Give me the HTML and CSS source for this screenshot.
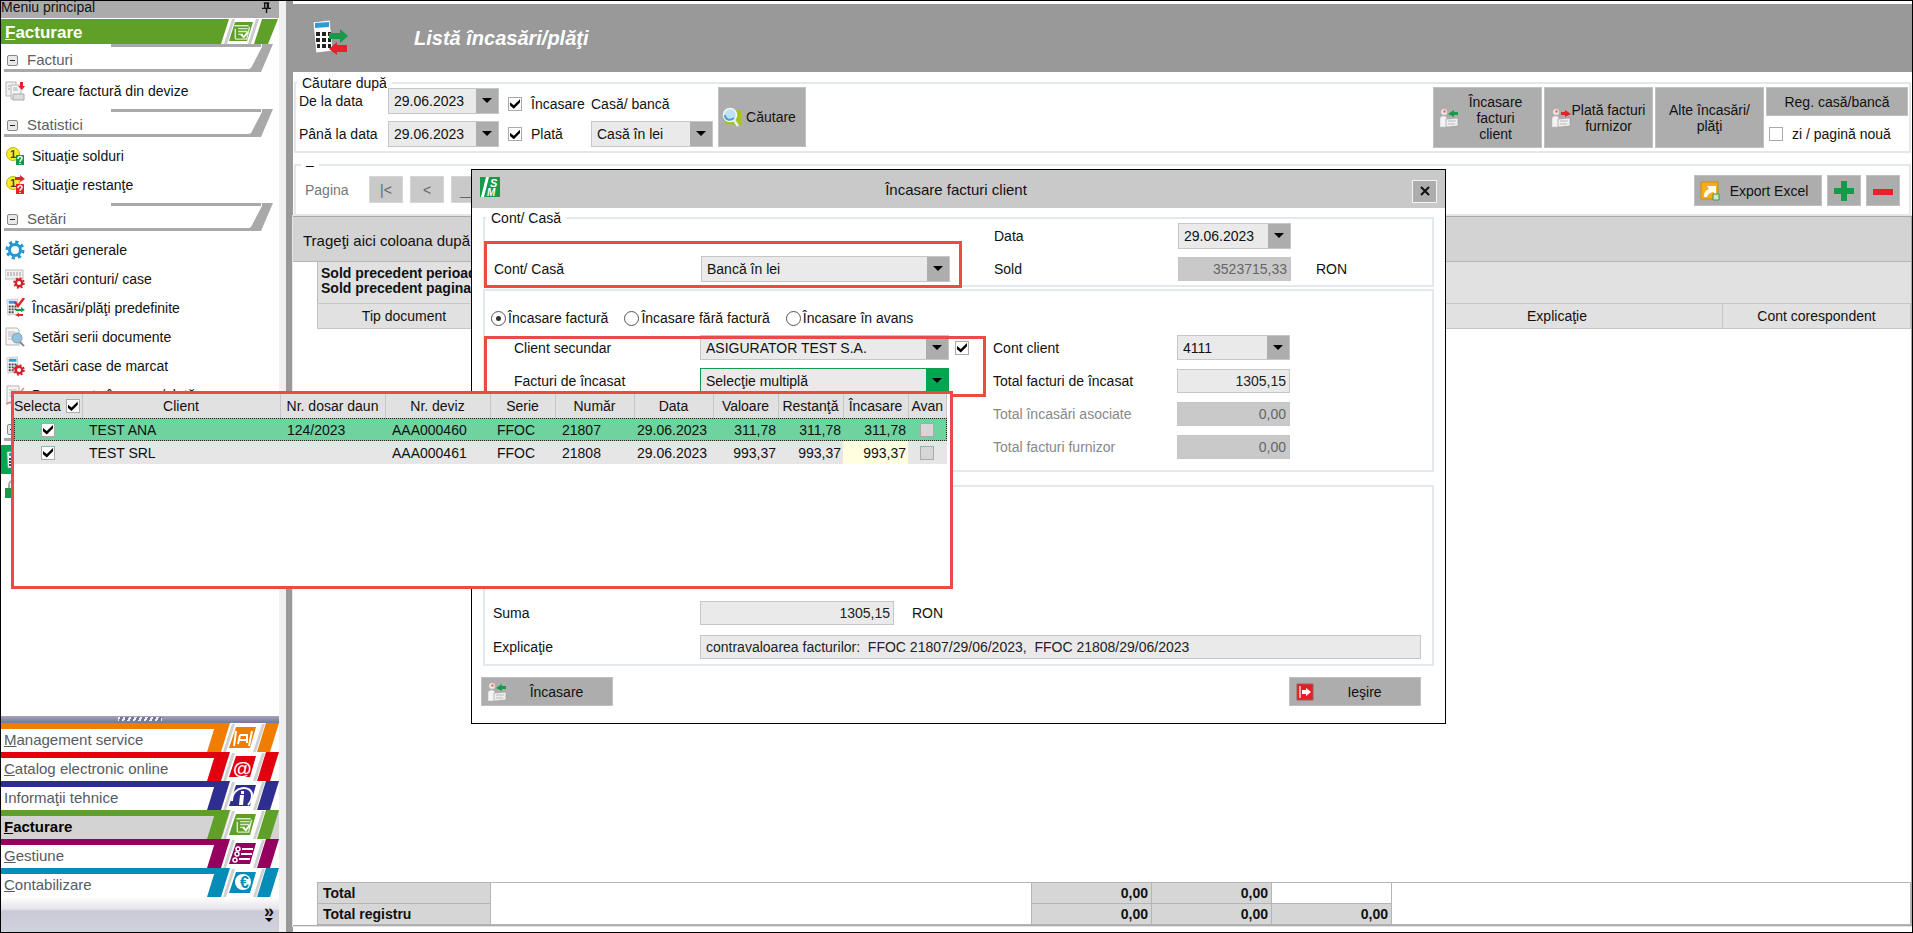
FILE: index.html
```html
<!DOCTYPE html>
<html lang="ro">
<head>
  <meta charset="UTF-8" />
  <meta name="viewport" content="width=device-width, initial-scale=1.0" />
  <title>Listă încasări/plăţi</title>
  <link rel="stylesheet" href="styles.css">
</head>
<body>
  <!-- icons -->
  <svg class="sprite" aria-hidden="true">
    <symbol id="calc" viewBox="0 0 20 20">
      <path d="M2 2l11-1 1 16-11 1z" fill="#f4f4f4" stroke="#aaa" stroke-width=".6" />
      <path d="M4 3h8v3H4z" fill="#2a9bd6" />
      <path d="M4 8h2v2H4zm3 0h2v2H7zm3 0h2v2h-2zM4 11h2v2H4zm3 0h2v2H7zm3 0h2v2h-2zM4 14h2v2H4zm3 0h2v2H7z" fill="#444" />
    </symbol>
    <symbol id="calc-arrows" viewBox="0 0 36 36">
      <path d="M1 2l17-2 3 31-17 2z" fill="#fff" stroke="#888" stroke-width=".7" />
      <path d="M3 3l14-1v5l-14 1z" fill="#2a9bd6" />
      <path d="M4 12h4v4H4zm6 0h4v4h-4zm6 0h3v4h-3zM4 18h4v4H4zm6 0h4v4h-4zm6 0h3v4h-3zM5 24h3v4H5zm5 0h4v4h-4zm6 0h3v4h-3z" fill="#222" />
      <path d="M17 13h11V9l8 7-8 7v-4H17z" fill="#159a49" />
      <path d="M35 25H25v-3l-8 7 8 6v-3h10z" fill="#e62129" />
    </symbol>
    <symbol id="doc-down" viewBox="0 0 20 20">
      <path d="M1 1h10v14H1z" fill="#f1f1f1" stroke="#b5b5b5" />
      <path d="M6 4h10v14H6z" fill="#f7f7f7" stroke="#b5b5b5" />
      <path d="M8 7h4M8 9h5M3 5h2M3 8h2" stroke="#aaa" />
      <path d="M8 13h11v6H8z" fill="#ddd" stroke="#aaa" />
      <path d="M15 1h3v4h2l-3 4-4-4h2z" fill="#e62129" />
    </symbol>
    <symbol id="coin-green" viewBox="0 0 20 20">
      <circle cx="8" cy="8" r="6.500" fill="#ffee1e" stroke="#b9ae2c" />
      <text x="5" y="12" class="glyph">1</text>
      <path d="M11 9h8v10h-8z" fill="#159a49" />
      <path d="M13 13c0-3 4-3 4-1s-2 2-2 4M15 17v1" fill="none" stroke="#fff" stroke-width="1.500" />
    </symbol>
    <symbol id="coin-red" viewBox="0 0 20 20">
      <circle cx="8" cy="8" r="6.500" fill="#ffee1e" stroke="#b9ae2c" />
      <text x="5" y="12" class="glyph">1</text>
      <path d="M11 9h8v10h-8z" fill="#e62129" />
      <path d="M13 13c0-3 4-3 4-1s-2 2-2 4M15 17v1" fill="none" stroke="#fff" stroke-width="1.500" />
      <path d="M10 2h5V0l5 4-5 3V5h-5z" fill="#e62129" />
    </symbol>
    <symbol id="gear" viewBox="0 0 20 20">
      <circle cx="10" cy="10" r="8" fill="none" stroke="#2498d2" stroke-width="3" stroke-dasharray="3.200 3.080" />
      <circle cx="10" cy="10" r="5.500" fill="#fff" stroke="#2498d2" stroke-width="3" />
    </symbol>
    <symbol id="red-gear" viewBox="0 0 12 12">
      <circle cx="6" cy="6" r="4.800" fill="none" stroke="#d2232a" stroke-width="2" stroke-dasharray="1.900 1.870" />
      <circle cx="6" cy="6" r="3.200" fill="#fff" stroke="#d2232a" stroke-width="2.400" />
    </symbol>
    <symbol id="accounts" viewBox="0 0 20 20">
      <path d="M0 1h18v9H0z" fill="#f1f1f1" stroke="#bbb" />
      <path d="M2 4h14M2 6h14" stroke="#999" stroke-dasharray="2 1" />
      <use href="#red-gear" x="8" y="8" width="12" height="12" />
    </symbol>
    <symbol id="calc-check" viewBox="0 0 20 20">
      <use href="#calc" width="19" height="19" />
      <path d="M10 4l3 4 6-8" fill="none" stroke="#e62129" stroke-width="2.500" />
      <path d="M11 11h5V9l4 3-4 2v-1h-5z" fill="#159a49" />
      <path d="M18 16h-4v-1l-4 2 4 2v-1h4z" fill="#e62129" />
    </symbol>
    <symbol id="doc-search" viewBox="0 0 20 20">
      <path d="M1 1h11l2 2v15H1z" fill="#f6f6f6" stroke="#b5b5b5" />
      <path d="M3 5h7M3 7h7M3 9h4M3 12h4" stroke="#bbb" />
      <circle cx="12" cy="11" r="5" fill="#8fc4e4" stroke="#8b9aa5" />
      <path d="M15 15l4 4" stroke="#888" stroke-width="2" />
    </symbol>
    <symbol id="calc-gear" viewBox="0 0 20 20">
      <use href="#calc" width="19" height="19" />
      <use href="#red-gear" x="8" y="8" width="12" height="12" />
    </symbol>
    <symbol id="doc-check" viewBox="0 0 20 20">
      <path d="M2 1h12v17H2z" fill="#f6f6f6" stroke="#b5b5b5" />
      <path d="M4 5h8M4 8h8M4 11h8" stroke="#bbb" />
      <path d="M1 19l5-2 13-14" fill="none" stroke="#e78585" stroke-width="1.500" />
    </symbol>
    <symbol id="lock" viewBox="0 0 20 20">
      <path d="M4 9V6c0-6 9-6 9 0v3" fill="none" stroke="#aaa" stroke-width="2" />
      <path d="M0 9h16v10H0z" fill="#159a49" />
    </symbol>
    <symbol id="person-in" viewBox="0 0 20 20">
      <circle cx="5" cy="4" r="3" fill="#f7e4e4" stroke="#ccc" stroke-width=".5" />
      <path d="M5 2l2 1-1 2-2-1z" fill="#ee6a6a" />
      <path d="M1 19V11c0-4 7-4 7 0l4 2v6z" fill="#f4f4f4" stroke="#bbb" stroke-width=".5" />
      <path d="M7 11l12-1v8l-12 1z" fill="#eee" stroke="#999" stroke-width=".6" />
      <path d="M9 13h8M9 16h7" stroke="#bbb" />
      <path d="M19 4h-4V2l-6 4 6 3V7h4z" fill="#159a49" />
    </symbol>
    <symbol id="person-out" viewBox="0 0 20 20">
      <circle cx="5" cy="4" r="3" fill="#f7e4e4" stroke="#ccc" stroke-width=".5" />
      <path d="M5 2l2 1-1 2-2-1z" fill="#ee6a6a" />
      <path d="M1 19V11c0-4 7-4 7 0l4 2v6z" fill="#f4f4f4" stroke="#bbb" stroke-width=".5" />
      <path d="M7 11l12-1v8l-12 1z" fill="#eee" stroke="#999" stroke-width=".6" />
      <path d="M9 13h8M9 16h7" stroke="#bbb" />
      <path d="M10 4h4V2l6 4-6 3V7h-4z" fill="#e62129" />
    </symbol>
    <symbol id="search" viewBox="0 0 20 20">
      <path d="M3 4l16-1v15l-16-1z" fill="#a5c41a" />
      <circle cx="8" cy="8" r="6.500" fill="#bfe2f5" stroke="#f2f6f8" stroke-width="1.500" />
      <path d="M3 8c0 5 5 6 9 3" fill="none" stroke="#4a9ed0" stroke-width="2" />
      <path d="M12 13l4 6" stroke="#e8eef1" stroke-width="2.500" />
    </symbol>
    <symbol id="export" viewBox="0 0 20 20">
      <path d="M1 1h17v17H1z" fill="#fbab13" stroke="#c98d1b" />
      <path d="M4 16c0-5 2-7 5-8L7 5h9v9l-3-3c-3 1-5 2-6 5z" fill="#fff" />
      <path d="M13 13h6v6h-6z" fill="#cfe5cc" stroke="#3f9b48" />
    </symbol>
    <symbol id="exit" viewBox="0 0 20 20">
      <path d="M2 2h16v16H2z" fill="#e61e25" stroke="#9b5b5b" />
      <path d="M5 4v12" stroke="#fff" stroke-width="1.200" />
      <path d="M7 8h4V6l5 4-5 4v-2H7z" fill="#fff" />
    </symbol>
    <symbol id="pin" viewBox="0 0 10 12">
      <path d="M2 1h6M3 1v6M7 1v6M6 1v6M0 7h10M5 7v5" stroke="#111" stroke-width="1.500" fill="none" />
    </symbol>
    <symbol id="invoice" viewBox="0 0 24 20">
      <path d="M5 4h15M6 7v11M9 7h10M9 10h10M9 13h5" stroke="#d9ecc8" stroke-width="1.500" fill="none" />
      <path d="M6 18h12l3-13" stroke="#d9ecc8" stroke-width="1.500" fill="none" />
      <path d="M12 13l3 3 4-5" stroke="#fff" stroke-width="2" fill="none" />
    </symbol>
    <symbol id="band" viewBox="0 0 72 29">
      <path d="M0 29L9 0h14L14 29z" fill="currentColor" />
      <path d="M15 29L24 0h36l-9 29z" fill="#fff" />
      <path d="M16 29L25 1h3l-9 28zM46 29l9-28h3l-9 28z" fill="#d0d0d0" />
      <path d="M22 25l7-21h20l-6 21z" fill="currentColor" />
      <path d="M50 29L59 0h13l-9 29z" fill="currentColor" />
    </symbol>
    <symbol id="slash" viewBox="0 0 24 28">
      <path d="M13 0h11L12 28H0v-3l2-1L13 3z" fill="#a9a9a9" />
    </symbol>
  </svg>

  <nav class="sidebar">
    <div class="menu-bar">Meniu principal <svg><use href="#pin" /></svg></div>
    <h2 class="menu-title"><span><u>F</u>acturare</span>
      <svg viewBox="0 0 58 25">
        <path d="M0 25L8 0h33l-8 25zM47 25L57 0h1v25z" fill="#fff" />
        <path d="M3 25L11 0h3L6 25zM27 25L35 0h3l-8 25z" fill="#ccc" />
        <path d="M8 22l6-19h18l-6 19z" fill="#5fa128" />
        <use href="#invoice" x="8" y="3" width="24" height="19" />
      </svg>
    </h2>

    <div class="section"><i class="minus"></i>Facturi<svg><use href="#slash" /></svg></div>
    <ul>
      <li><a href="#"><svg><use href="#doc-down" /></svg>Creare factură din devize</a></li>
    </ul>
    <div class="section"><i class="minus"></i>Statistici<svg><use href="#slash" /></svg></div>
    <ul>
      <li><a href="#"><svg><use href="#coin-green" /></svg>Situaţie solduri</a></li>
      <li><a href="#"><svg><use href="#coin-red" /></svg>Situaţie restanţe</a></li>
    </ul>
    <div class="section"><i class="minus"></i>Setări<svg><use href="#slash" /></svg></div>
    <ul>
      <li><a href="#"><svg><use href="#gear" /></svg>Setări generale</a></li>
      <li><a href="#"><svg><use href="#accounts" /></svg>Setări conturi/ case</a></li>
      <li><a href="#"><svg><use href="#calc-check" /></svg>Încasări/plăţi predefinite</a></li>
      <li><a href="#"><svg><use href="#doc-search" /></svg>Setări serii documente</a></li>
      <li><a href="#"><svg><use href="#calc-gear" /></svg>Setări case de marcat</a></li>
      <li><a href="#"><svg><use href="#doc-check" /></svg>Documente încasare/plată</a></li>
    </ul>
    <div class="section"><i class="minus"></i><svg><use href="#slash" /></svg></div>
    <ul>
      <li class="active"><a href="#"><svg><use href="#calc" /></svg></a></li>
      <li><a href="#"><svg><use href="#lock" /></svg></a></li>
    </ul>

    <div class="modules">
      <div class="grip"><i></i></div>
      <a href="#" class="module orange"><span><u>M</u>anagement service</span>
        <svg viewBox="0 0 72 29"><use href="#band" /><path d="M29 8l-2 15M45 8l-3 15M33 12h7v8M33 12l-2 9M32 17h8" stroke="#fff" stroke-width="2" fill="none" /></svg></a>
      <a href="#" class="module red"><span><u>C</u>atalog electronic online</span>
        <svg viewBox="0 0 72 29"><use href="#band" /><text x="26" y="23" class="at">@</text></svg></a>
      <a href="#" class="module blue"><span>Informaţii tehnice</span>
        <svg viewBox="0 0 72 29"><use href="#band" /><path d="M25 20C25 4 45 4 45 14c0 6-2 8-4 10" stroke="#fff" stroke-width="2" fill="none" /><path d="M34 10h3v3h-3zM33 14h4l-1 10h-4z" fill="#fff" /></svg></a>
      <a href="#" class="module green current"><span><u>F</u>acturare</span>
        <svg viewBox="0 0 72 29"><use href="#band" /><use href="#invoice" x="24" y="5" width="24" height="19" /></svg></a>
      <a href="#" class="module purple"><span><u>G</u>estiune</span>
        <svg viewBox="0 0 72 29"><use href="#band" /><path d="M35 10h11M34 15h11M32 20h11" stroke="#fff" stroke-width="2" /><g fill="none" stroke="#fff" stroke-width="1.500"><circle cx="31" cy="10" r="2" /><circle cx="30" cy="15" r="2" /><circle cx="28" cy="21" r="2" /></g></svg></a>
      <a href="#" class="module teal"><span><u>C</u>ontabilizare</span>
        <svg viewBox="0 0 72 29"><use href="#band" /><circle cx="36" cy="14" r="8" fill="#fff" /><text x="33" y="20" class="euro">€</text></svg></a>
      <div class="more"><button aria-label="Mai multe">»</button></div>
    </div>
  </nav>
  <div class="splitter"></div>

  <main>
    <header>
      <svg><use href="#calc-arrows" /></svg>
      <h1>Listă încasări/plăţi</h1>
    </header>

    <fieldset class="search">
      <legend>Căutare după</legend>
      <div class="bar">
        <div class="filters">
          <label for="from">De la data</label>
          <div class="combo"><select id="from"><option>29.06.2023</option></select></div>
          <label class="check"><input type="checkbox" checked>Încasare</label>
          <label for="cash">Casă/ bancă</label>
          <label for="to">Până la data</label>
          <div class="combo"><select id="to"><option>29.06.2023</option></select></div>
          <label class="check"><input type="checkbox" checked>Plată</label>
          <div class="combo"><select id="cash"><option>Casă în lei</option></select></div>
        </div>
        <button class="btn find"><svg><use href="#search" /></svg>Căutare</button>
        <div class="actions">
          <button class="btn narrow"><svg><use href="#person-in" /></svg><span>Încasare facturi client</span></button>
          <button class="btn"><svg><use href="#person-out" /></svg><span>Plată facturi furnizor</span></button>
          <button class="btn"><span>Alte încasări/ plăţi</span></button>
          <div class="registry">
            <button class="btn">Reg. casă/bancă</button>
            <label class="check"><input type="checkbox">zi / pagină nouă</label>
          </div>
        </div>
      </div>
    </fieldset>

    <fieldset class="paging">
      <legend>–</legend>
      <div class="bar">
        <span class="page-label">Pagina</span>
        <button class="btn off" disabled>|&lt;</button>
        <button class="btn off" disabled>&lt;</button>
        <button class="btn off" disabled>__</button>
        <div class="tools">
          <button class="btn export"><svg><use href="#export" /></svg>Export Excel</button>
          <button class="btn" aria-label="Adaugă"><svg viewBox="0 0 20 20"><path d="M7 0h6v7h7v6h-7v7H7v-7H0V7h7z" fill="#159a49" /></svg></button>
          <button class="btn" aria-label="Şterge"><svg viewBox="0 0 20 20"><path d="M0 8h20v6H0z" fill="#e62129" /></svg></button>
        </div>
      </div>
    </fieldset>

    <section class="grid">
      <div class="group-panel">Trageţi aici coloana după</div>
      <div class="balance">Sold precedent perioada<br>Sold precedent pagina</div>
      <table>
        <colgroup><col class="c-type"><col class="c-mid"><col class="c-sum"><col class="c-sum"><col class="c-sum"><col class="c-expl"><col></colgroup>
        <tr><th>Tip document</th><th></th><th></th><th></th><th></th><th>Explicaţie</th><th>Cont corespondent</th></tr>
      </table>
      <table class="totals">
        <colgroup><col class="c-type"><col class="c-mid"><col class="c-sum"><col class="c-sum"><col class="c-sum"><col class="c-expl"><col></colgroup>
        <tr><th>Total</th><td rowspan="2"></td><th>0,00</th><th>0,00</th><td></td><td colspan="2" rowspan="2"></td></tr>
        <tr><th>Total registru</th><th>0,00</th><th>0,00</th><th>0,00</th></tr>
      </table>
    </section>
  </main>

  <div class="dialog" role="dialog" aria-labelledby="dialog-title">
    <div class="titlebar">
      <svg viewBox="0 0 20 20">
        <path d="M0 0h20v20H0z" fill="#159a49" />
        <path d="M1 20L6 0h3L4 20z" fill="#fff" />
        <text x="10" y="10" class="logo-s">S</text>
        <text x="7" y="19" class="logo-m">M</text>
      </svg>
      <h2 id="dialog-title">Încasare facturi client</h2>
      <button aria-label="Închide"><svg viewBox="0 0 10 10"><path d="M1 1l8 8M9 1l-8 8" stroke="#111" stroke-width="2" /></svg></button>
    </div>
    <div class="content">
      <fieldset class="account">
        <legend>Cont/ Casă</legend>
        <div class="form">
          <label class="right" for="date">Data</label>
          <div class="combo"><select id="date"><option>29.06.2023</option></select></div>
          <label for="account">Cont/ Casă</label>
          <div class="combo wide"><select id="account"><option>Bancă în lei</option></select></div>
          <label class="right" for="balance">Sold</label>
          <input type="text" id="balance" class="num" value="3523715,33" disabled>
          <span class="currency">RON</span>
        </div>
        <div class="mark mark-account"></div>
      </fieldset>

      <fieldset class="invoice">
        <div class="radios">
          <label><input type="radio" name="kind" checked>Încasare factură</label>
          <label><input type="radio" name="kind">Încasare fără factură</label>
          <label><input type="radio" name="kind">Încasare în avans</label>
        </div>
        <div class="form">
          <label class="indent" for="client">Client secundar</label>
          <div class="combo wide"><select id="client"><option>ASIGURATOR TEST S.A.</option></select></div>
          <input type="checkbox" aria-label="Client secundar" checked>
          <label class="right" for="client-account">Cont client</label>
          <div class="combo"><select id="client-account"><option>4111</option></select></div>
          <label class="indent" for="invoices">Facturi de încasat</label>
          <div class="combo wide open"><select id="invoices"><option>Selecţie multiplă</option></select></div>
          <label class="right" for="total-in">Total facturi de încasat</label>
          <input type="text" id="total-in" class="num" value="1305,15">
          <label class="right muted" for="total-as">Total încasări asociate</label>
          <input type="text" id="total-as" class="num" value="0,00" disabled>
          <label class="right muted" for="total-out">Total facturi furnizor</label>
          <input type="text" id="total-out" class="num" value="0,00" disabled>
        </div>
        <div class="mark mark-invoice"></div>
      </fieldset>

      <fieldset class="amount">
        <div class="form">
          <label for="sum">Suma</label>
          <div class="sum"><input type="text" id="sum" class="num" value="1305,15"><span>RON</span></div>
          <label for="note">Explicaţie</label>
          <input type="text" id="note" value="contravaloarea facturilor:  FFOC 21807/29/06/2023,  FFOC 21808/29/06/2023">
        </div>
      </fieldset>
    </div>
    <div class="buttons">
      <button class="btn"><svg><use href="#person-in" /></svg><span>Încasare</span></button>
      <button class="btn"><svg><use href="#exit" /></svg><span>Ieşire</span></button>
    </div>
  </div>

  <div class="picker">
    <table>
      <colgroup><col class="p-sel"><col class="p-client"><col class="p-ref"><col class="p-ref"><col class="p-num"><col class="p-date"><col class="p-date"><col class="p-num"><col class="p-num"><col class="p-num"><col></colgroup>
      <tr>
        <th><label>Selecta<input type="checkbox" checked></label></th>
        <th>Client</th><th>Nr. dosar daun</th><th>Nr. deviz</th><th>Serie</th><th>Număr</th><th>Data</th><th>Valoare</th><th>Restanţă</th><th>Încasare</th><th>Avan</th>
      </tr>
      <tr class="selected">
        <td class="tick"><input type="checkbox" aria-label="TEST ANA" checked></td>
        <td>TEST ANA</td><td>124/2023</td><td>AAA000460</td><td>FFOC</td><td>21807</td><td class="date">29.06.2023</td><td class="money">311,78</td><td class="money">311,78</td><td class="money">311,78</td>
        <td class="tick"><input type="checkbox" aria-label="Avans TEST ANA" disabled></td>
      </tr>
      <tr>
        <td class="tick"><input type="checkbox" aria-label="TEST SRL" checked></td>
        <td>TEST SRL</td><td></td><td>AAA000461</td><td>FFOC</td><td>21808</td><td class="date">29.06.2023</td><td class="money">993,37</td><td class="money">993,37</td><td class="money edit">993,37</td>
        <td class="tick"><input type="checkbox" aria-label="Avans TEST SRL" disabled></td>
      </tr>
    </table>
  </div>
</body>
</html>
```
FILE: styles.css
```css
* {
  box-sizing: border-box;
}
body {
  margin: 0;
  height: 100vh;
  display: flex;
  position: relative;
  overflow: hidden;
  border: 1px solid #000;
  background: #fff;
  color: #111;
  font: 14px/16px "Liberation Sans", Arial, sans-serif;
}
h1, h2, ul, fieldset, legend {
  margin: 0;
  padding: 0;
}
a {
  color: inherit;
  text-decoration: none;
}
svg {
  display: block;
  flex: none;
}
.sprite {
  display: none;
}
.glyph {
  font: bold 11px "Liberation Sans", sans-serif;
  fill: #444;
}

/* form controls */
input, select, button {
  font: inherit;
  color: inherit;
  margin: 0;
}
input[type="text"] {
  height: 24px;
  min-width: 0;
  padding: 0 5px;
  border: 1px solid #c6c6c6;
  border-radius: 0;
  background: #eaeaea;
  color: #222;
}
input[type="text"]:disabled {
  background: #c9c9c9;
  color: #666;
}
input.num {
  padding-right: 3px;
  text-align: right;
}
input[type="checkbox"] {
  appearance: none;
  flex: none;
  display: grid;
  place-content: center;
  width: 14px;
  height: 14px;
  border: 1px solid #aaa;
  background: #fff;
}
input[type="checkbox"]:checked::before {
  content: "";
  width: 10px;
  height: 10px;
  background: #000;
  clip-path: polygon(0 35%, 38% 65%, 100% 5%, 100% 38%, 38% 100%, 0 68%);
}
input[type="checkbox"]:disabled {
  background: #d6d6d6;
}
input[type="radio"] {
  appearance: none;
  display: grid;
  place-content: center;
  width: 15px;
  height: 15px;
  border: 1px solid #555;
  border-radius: 50%;
  background: #fff;
}
input[type="radio"]:checked::before {
  content: "";
  width: 5px;
  height: 5px;
  border-radius: 50%;
  background: #333;
}
.combo {
  position: relative;
  height: 26px;
}
.combo select {
  appearance: none;
  width: 100%;
  height: 100%;
  padding: 0 24px 0 5px;
  border: 1px solid #c6c6c6;
  border-radius: 0;
  background: #eaeaea;
}
.combo::before {
  content: "";
  position: absolute;
  top: 1px;
  right: 1px;
  bottom: 1px;
  width: 22px;
  background: #adadad;
  pointer-events: none;
}
.combo::after {
  content: "";
  position: absolute;
  top: 50%;
  right: 7px;
  margin-top: -3px;
  border: 5px solid transparent;
  border-top-color: #000;
  border-bottom: 0;
  pointer-events: none;
}
.combo.open select {
  border-color: #159a49;
}
.combo.open::before {
  background: #00a650;
}
.btn {
  display: flex;
  align-items: center;
  justify-content: center;
  padding: 0;
  border: 1px solid #c0c0c0;
  background: #adadad;
}
.btn svg {
  width: 20px;
  height: 20px;
}
.check {
  display: flex;
  align-items: center;
  gap: 9px;
}
fieldset {
  min-width: 0;
  border: 2px solid #e2e8ec;
}
legend {
  margin-left: 1px;
  padding: 0 5px;
  line-height: 6px;
}

/* left menu */
.sidebar {
  width: 278px;
  flex: none;
  display: flex;
  flex-direction: column;
}
.menu-bar {
  display: flex;
  justify-content: space-between;
  flex: none;
  height: 17px;
  padding-right: 8px;
  margin-bottom: 1px;
  line-height: 13px;
  background: #ababab;
}
.menu-bar svg {
  width: 9px;
  height: 11px;
  margin-top: 1px;
}
.menu-title {
  display: flex;
  justify-content: space-between;
  flex: none;
  height: 25px;
  padding-left: 4px;
  background: #5fa128;
  color: #fff;
  font-size: 17px;
  line-height: 27px;
}
.menu-title svg {
  width: 58px;
  height: 25px;
}
.section {
  display: flex;
  align-items: center;
  flex: none;
  position: relative;
  height: 28px;
  margin: 0 6px 0 3px;
  padding: 4px 0 0 3px;
  background: linear-gradient(#a9a9a9, #a9a9a9) 107px 0 / 150px 3px no-repeat, linear-gradient(#a9a9a9, #a9a9a9) 0 25px / 252px 3px no-repeat;
  color: #5c6066;
  font-size: 15px;
}
.section svg {
  position: absolute;
  top: 0;
  right: 0;
  width: 24px;
  height: 28px;
}
.minus {
  width: 11px;
  height: 11px;
  margin-right: 9px;
  border: 1px solid #888;
  border-radius: 2px;
  background: linear-gradient(#222, #222) center / 5px 1px no-repeat #e8e8e8;
}
.sidebar ul {
  padding: 4px 0;
  list-style: none;
}
.sidebar li a {
  display: flex;
  align-items: center;
  gap: 7px;
  height: 29px;
  padding-left: 4px;
}
.sidebar li svg {
  width: 20px;
  height: 20px;
}
.sidebar .active {
  background: #00a650;
}
.modules {
  margin-top: auto;
}
.grip {
  display: flex;
  justify-content: center;
  height: 7px;
  background: linear-gradient(#a5a5bb, #75759a);
}
.grip i {
  width: 44px;
  height: 4px;
  margin-top: 1px;
  background: repeating-linear-gradient(115deg, #eee 0 2px, #75759a 2px 5px);
}
.module {
  display: flex;
  justify-content: space-between;
  height: 29px;
  padding-left: 3px;
  line-height: 33px;
  font-size: 15px;
  background: linear-gradient(currentColor, currentColor) 0 0 / 220px 6px no-repeat;
}
.module span {
  color: #555b62;
}
.module svg {
  width: 72px;
  height: 29px;
}
.module.current {
  background-color: #d3d3d3;
  font-weight: bold;
}
.module.current span {
  color: #000;
}
.orange { color: #f07d00; }
.red { color: #e2000f; }
.blue { color: #2d2e8f; }
.green { color: #5fa128; }
.purple { color: #95005f; }
.teal { color: #058db8; }
.at {
  font: bold 19px "Liberation Sans", sans-serif;
  fill: #fff;
}
.euro {
  font: bold 16px "Liberation Sans", sans-serif;
  fill: #058db8;
}
.more {
  display: flex;
  justify-content: flex-end;
  height: 35px;
  padding-right: 5px;
  background: linear-gradient(#fff, #e4e4ea 12px, #c9cad6 14px, #d0d2de);
}
.more button {
  position: relative;
  height: 28px;
  padding: 0;
  border: 0;
  background: none;
  font: bold 18px/22px "Liberation Sans", sans-serif;
}
.more button::after {
  content: "";
  position: absolute;
  bottom: 3px;
  left: 1px;
  border: 4px solid transparent;
  border-top-color: #000;
  border-bottom: 0;
}
.splitter {
  flex: none;
  width: 14px;
  border-left: 7px solid #f0f0f0;
  background: #999;
}

/* main list */
main {
  flex: 1;
  min-width: 0;
  display: flex;
  flex-direction: column;
}
header {
  display: flex;
  align-items: center;
  flex: none;
  height: 68px;
  margin-top: 3px;
  padding-left: 19px;
  background: #999;
}
header svg {
  width: 36px;
  height: 36px;
}
h1 {
  margin-left: 66px;
  color: #fff;
  font: italic bold 20px/24px "Liberation Sans", Arial, sans-serif;
}
.bar {
  display: flex;
}
.search {
  margin: 8px 1px 0;
}
.search .bar {
  padding: 1px 1px 3px 3px;
}
.filters {
  display: grid;
  grid-template-columns: 89px 111px 92px 122px;
  row-gap: 6px;
  align-items: center;
}
.filters .check {
  padding-left: 9px;
}
.filters .check:nth-child(3), .filters .check + label {
  padding-top: 6px;
}
.find {
  width: 88px;
  height: 60px;
  margin-left: 5px;
  padding-right: 6px;
  gap: 4px;
}
.actions {
  display: flex;
  gap: 2px;
  margin-left: auto;
}
.actions > .btn {
  width: 109px;
  height: 61px;
  padding: 0 6px;
}
.actions > .narrow {
  padding-right: 20px;
}
.actions .narrow span {
  padding-left: 10px;
}
.actions .btn span {
  flex: 1;
}
.registry {
  width: 142px;
}
.registry .btn {
  width: 100%;
  height: 29px;
}
.registry .check {
  margin: 10px 0 0 3px;
}
.paging {
  margin: 9px 1px 0;
}
.paging legend {
  margin-left: 5px;
}
.paging .bar {
  gap: 7px;
  height: 46px;
  padding: 7px 9px;
}
.page-label {
  width: 57px;
  line-height: 30px;
  color: #777;
}
.off {
  width: 34px;
  height: 27px;
  margin-top: 1px;
  border-color: #d6d6d6;
  background: #c9c9c9;
  color: #666;
}
.tools {
  display: flex;
  gap: 5px;
  margin-left: auto;
}
.tools .btn {
  width: 34px;
  height: 31px;
}
.tools .export {
  width: 128px;
  padding-right: 8px;
  gap: 10px;
}
.grid {
  flex: 1;
  display: flex;
  flex-direction: column;
  margin-bottom: 6px;
  border: 1px solid #aaa;
  border-width: 1px 1px 1px 0;
  outline: 1px solid #e5e5e5;
}
.group-panel {
  height: 45px;
  padding-left: 10px;
  font-size: 15px;
  line-height: 48px;
  background: #d3d3d3;
  border-bottom: 1px solid #b5b5b5;
}
.balance {
  height: 41px;
  margin-left: 24px;
  padding: 4px 3px;
  border-left: 1px solid #bbb;
  background: #e1e1e1;
  font-weight: bold;
  line-height: 15px;
}
.grid table {
  table-layout: fixed;
  width: calc(100% - 24px);
  margin-left: 24px;
  border-collapse: collapse;
}
.grid th, .grid td {
  height: 25px;
  padding: 0 3px;
  border: 1px solid #c6c6c6;
}
.grid th {
  background: #e1e1e1;
  font-weight: normal;
}
.c-type { width: 173px; }
.c-mid { width: 541px; }
.c-sum { width: 120px; }
.c-expl { width: 331px; }
.grid .totals {
  margin-top: auto;
}
.grid .totals th, .grid .totals td {
  height: 21px;
  border-color: #b5b5b5;
}
.grid .totals th {
  background: #d6d6d6;
  font-weight: bold;
  text-align: right;
}
.grid .totals th:first-child {
  padding-left: 5px;
  text-align: left;
}

/* dialog */
.dialog {
  position: absolute;
  top: 168px;
  left: 470px;
  width: 975px;
  border: 1px solid #000;
  background: #fff;
}
.titlebar {
  display: flex;
  align-items: center;
  height: 38px;
  padding: 0 8px;
  background: #c9c9c9;
}
.titlebar > svg {
  width: 20px;
  height: 20px;
  margin-bottom: 4px;
}
.titlebar h2 {
  flex: 1;
  padding-top: 2px;
  font-size: 15px;
  font-weight: normal;
  text-align: center;
}
.titlebar button {
  display: grid;
  place-content: center;
  width: 25px;
  height: 23px;
  margin-top: 4px;
  padding: 0;
  border: 1px solid #f4f4f4;
  background: #adadad;
}
.titlebar button svg {
  width: 10px;
  height: 10px;
}
.logo-s, .logo-m {
  font: italic bold 11px "Liberation Sans", sans-serif;
  fill: #fff;
}
.logo-m {
  font-size: 10px;
}
.content {
  padding: 0 11px;
}
.content fieldset {
  position: relative;
}
.content legend {
  line-height: 8px;
}
.form {
  display: grid;
  grid-template-columns: 207px 249px 44px 184px 113px 25px 1fr;
  grid-auto-rows: 25px;
  align-items: center;
  padding-left: 8px;
}
.form label {
  grid-column: 1;
}
.form .right {
  grid-column: 4;
}
.form .combo, .form > .num {
  grid-column: 5;
}
.form .wide {
  grid-column: 2;
}
.form .currency {
  grid-column: 7;
}
.form .indent {
  padding-left: 21px;
}
.form > input[type="checkbox"] {
  grid-column: 3;
  margin-left: 6px;
}
.muted {
  color: #888;
}
.account {
  margin-top: 6px;
}
.account .form {
  row-gap: 7px;
  grid-auto-rows: 26px;
  padding: 1px 0 3px 9px;
}
.invoice {
  margin-top: 2px;
}
.invoice .form {
  row-gap: 8px;
  padding-bottom: 11px;
}
.invoice .combo {
  height: 25px;
}
.radios {
  display: flex;
  gap: 16px;
  padding: 15px 0 5px 6px;
}
.radios label {
  display: flex;
  align-items: center;
  gap: 2px;
  height: 24px;
}
.amount {
  margin-top: 13px;
}
.amount .form {
  row-gap: 9px;
  padding: 113px 0 5px 8px;
}
.sum {
  display: flex;
  align-items: center;
  gap: 18px;
}
.sum input {
  width: 194px;
}
#note {
  grid-column: 2 / 8;
  margin-right: 11px;
}
.buttons {
  display: flex;
  justify-content: space-between;
  padding: 11px 24px 17px 9px;
}
.buttons .btn {
  width: 132px;
  height: 29px;
  padding-left: 5px;
}
.buttons span {
  flex: 1;
  padding-right: 6px;
}
.mark {
  position: absolute;
  border: 3px solid #ea4b47;
  pointer-events: none;
}
.mark-account {
  top: 19px;
  left: -1px;
  width: 478px;
  height: 47px;
}
.mark-invoice {
  top: 45px;
  left: -1px;
  width: 502px;
  height: 61px;
}

/* invoice picker, opened over the dialog */
.picker {
  position: absolute;
  top: 390px;
  left: 10px;
  width: 942px;
  height: 198px;
  border: 3px solid #ea4b47;
  background: #fff;
}
.picker table {
  table-layout: fixed;
  width: 933px;
  border-collapse: collapse;
}
.picker th {
  height: 24px;
  padding: 0;
  border-right: 1px solid #c6c6c6;
  background: #e1e1e1;
  font-weight: normal;
  white-space: nowrap;
}
.picker th label {
  display: flex;
  align-items: center;
  gap: 5px;
}
.picker td {
  height: 23px;
  padding: 0 2px 0 7px;
  background: #e6e6e6;
}
.picker .selected td {
  background: #6fd39f;
}
.picker .selected {
  outline: 1px dotted #222;
  outline-offset: -1px;
}
.picker .money {
  padding: 0 2px;
  text-align: right;
}
.picker .date {
  padding: 0 3px;
}
.picker .edit {
  background: #ffffdf;
}
.picker .tick {
  padding: 0;
}
.picker .tick input {
  margin: 0 auto;
}
.p-sel { width: 68px; }
.p-client { width: 198px; }
.p-ref { width: 105px; }
.p-num { width: 65px; }
.p-date { width: 79px; }
```
